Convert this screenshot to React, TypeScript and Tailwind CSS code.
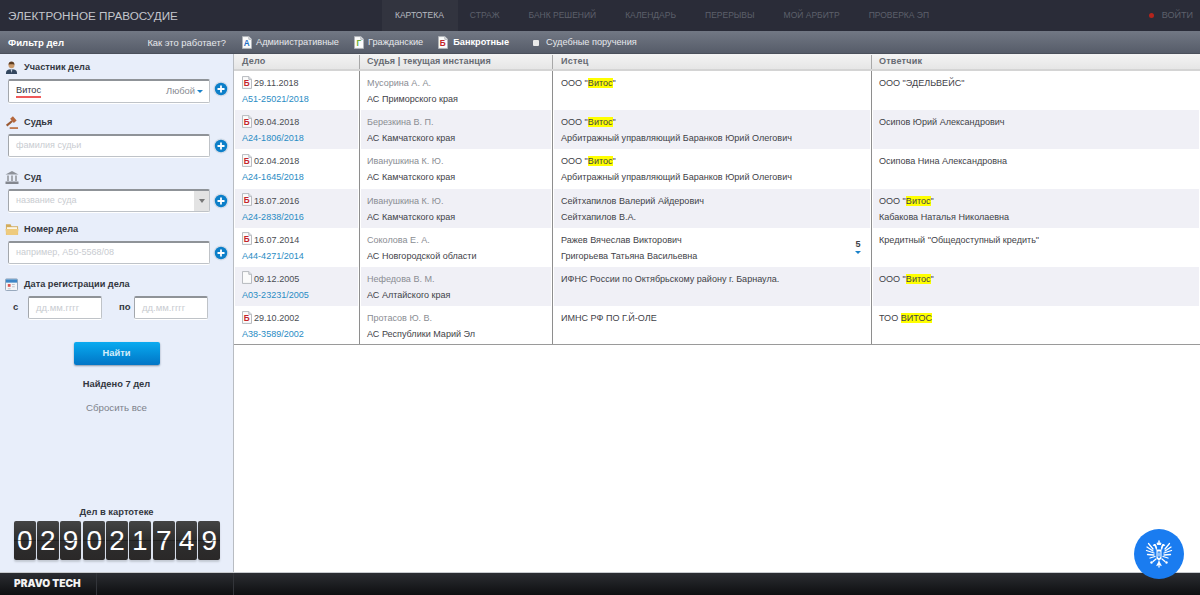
import React from 'react';

const FONT = "font-['Liberation_Sans',Arial,sans-serif]";

const tabs = ['КАРТОТЕКА', 'СТРАЖ', 'БАНК РЕШЕНИЙ', 'КАЛЕНДАРЬ', 'ПЕРЕРЫВЫ', 'МОЙ АРБИТР', 'ПРОВЕРКА ЭП'];

type Row = {
  kind: 'b' | 'none';
  date: string;
  num: string;
  judge: string;
  court: string;
  plaintiff: React.ReactNode[];
  defendant: React.ReactNode[];
  more?: boolean;
};

const Hl = ({ children }: { children: React.ReactNode }) => <span className="bg-[#ffff00]">{children}</span>;
const Vitos = () => <>ООО "<Hl>Витос</Hl>"</>;

const rows: Row[] = [
  { kind: 'b', date: '29.11.2018', num: 'А51-25021/2018', judge: 'Мусорина А. А.', court: 'АС Приморского края', plaintiff: [<Vitos />], defendant: ['ООО "ЭДЕЛЬВЕЙС"'] },
  { kind: 'b', date: '09.04.2018', num: 'А24-1806/2018', judge: 'Березкина В. П.', court: 'АС Камчатского края', plaintiff: [<Vitos />, 'Арбитражный управляющий Баранков Юрий Олегович'], defendant: ['Осипов Юрий Александрович'] },
  { kind: 'b', date: '02.04.2018', num: 'А24-1645/2018', judge: 'Иванушкина К. Ю.', court: 'АС Камчатского края', plaintiff: [<Vitos />, 'Арбитражный управляющий Баранков Юрий Олегович'], defendant: ['Осипова Нина Александровна'] },
  { kind: 'b', date: '18.07.2016', num: 'А24-2838/2016', judge: 'Иванушкина К. Ю.', court: 'АС Камчатского края', plaintiff: ['Сейтхапилов Валерий Айдерович', 'Сейтхапилов В.А.'], defendant: [<Vitos />, 'Кабакова Наталья Николаевна'] },
  { kind: 'b', date: '16.07.2014', num: 'А44-4271/2014', judge: 'Соколова Е. А.', court: 'АС Новгородской области', plaintiff: ['Ражев Вячеслав Викторович', 'Григорьева Татьяна Васильевна'], defendant: ['Кредитный "Общедоступный кредить"'], more: true },
  { kind: 'none', date: '09.12.2005', num: 'А03-23231/2005', judge: 'Нефедова В. М.', court: 'АС Алтайского края', plaintiff: ['ИФНС России по Октябрьскому району г. Барнаула.'], defendant: [<Vitos />] },
  { kind: 'b', date: '29.10.2002', num: 'А38-3589/2002', judge: 'Протасов Ю. В.', court: 'АС Республики Марий Эл', plaintiff: ['ИМНС РФ ПО Г.Й-ОЛЕ'], defendant: [<>ТОО <Hl>ВИТОС</Hl></>] },
];

const FileIcon = ({ letter, color }: { letter?: string; color?: string }) => (
  <svg width="10" height="13" viewBox="0 0 11 14" className="shrink-0">
    <path d="M.5.5h7l3 3v10H.5z" fill="#fbfbfb" stroke="#b0b3b8" />
    <path d="M7.500.5v3h3" fill="#e4e6ea" stroke="#b0b3b8" />
    {letter && (
      <text x="5.200" y="11" fontSize="9" fontWeight="700" textAnchor="middle" fill={color} fontFamily="Liberation Sans, Arial, sans-serif">
        {letter}
      </text>
    )}
  </svg>
);

const Plus = () => (
  <svg width="16" height="16" viewBox="0 0 16 16" className="shrink-0">
    <circle cx="8" cy="8" r="7.600" fill="#d3dce8" />
    <circle cx="8" cy="8" r="6.200" fill="#0c7fc9" />
    <path d="M4.500 8h7M8 4.500v7" stroke="#fff" strokeWidth="1.800" />
  </svg>
);

const PersonIcon = () => (
  <svg width="13" height="13" viewBox="0 0 14 14">
    <path d="M1 14c0-4 2-5 6-5s6 1 6 5z" fill="#33475f" />
    <path d="M6 9h2l-1 4z" fill="#c9d4e2" />
    <circle cx="7" cy="4.500" r="3.200" fill="#c99a6c" />
    <path d="M3.800 4c0-2.500 1.500-3.500 3.200-3.500S10.200 1.500 10.200 4C8.500 3.500 6 3.300 3.800 4z" fill="#5c3c22" />
  </svg>
);

const GavelIcon = () => (
  <svg width="14" height="13" viewBox="0 0 15 14">
    <path d="M1 9.500 7 4.500l1.500 1.700-6 5z" fill="#9a5a34" />
    <path d="m5.500 3 3-2.700 4 4.500-3 2.700z" fill="#b5673c" />
    <path d="M5 12h9v2H5z" fill="#c07a50" />
  </svg>
);

const BankIcon = () => (
  <svg width="14" height="13" viewBox="0 0 14 13">
    <path d="M7 0 13.500 3.500H.5z" fill="#8d9199" />
    <path d="M2 4.500h2v5.500H2zm4 0h2v5.500H6zm4 0h2v5.500h-2z" fill="#a5a9b0" />
    <path d="M.5 10.500h13V13H.5z" fill="#83878f" />
  </svg>
);

const FolderIcon = () => (
  <svg width="14" height="13" viewBox="0 0 15 13">
    <path d="M1 1h5l1 2h7v9H1z" fill="#d2ac5c" />
    <path d="M2 4h11v2H2z" fill="#fbf6e8" />
    <path d="M.5 6h14l-1 6.500h-12z" fill="#eecb7e" />
  </svg>
);

const CalendarIcon = () => (
  <svg width="13" height="13" viewBox="0 0 14 14">
    <rect x=".5" y="1" width="13" height="12.500" rx="1" fill="#f4f5f7" stroke="#8ea0b5" />
    <path d="M1 1.500h12V5H1z" fill="#3d86c6" />
    <path d="M3 6.500h3v3H3z" fill="#d9534f" />
    <path d="M7.500 6.500h3v1h-3zM7.500 9h3v1h-3zM3 11h3v1H3z" fill="#b9c3cf" />
  </svg>
);

// двуглавый орёл на синей кнопке
const Eagle = () => (
  <svg width="28" height="28" viewBox="0 0 28 28" fill="#fff">
    <path d="M14 0l1 1.200-1 1.200-1-1.200zM11.500 3 14 2l2.500 1-.7 2h-3.600z" />
    <path d="M8.500 4.500c1.200-.8 2.400-.3 2.800.8l.9 2.700-1 2.500-1.200-3.500-.5-1-1.800-.3zM19.500 4.500c-1.200-.8-2.400-.3-2.800.8l-.9 2.700 1 2.500 1.200-3.500.5-1 1.800-.3z" />
    <g stroke="#fff" strokeWidth="1.300" strokeLinecap="round" fill="none">
      <path d="M8 9 3.500 3.500M8 11 2 7M9 13 1.500 10.500M9 15 2.500 14.500M10 16.500l-5 1.500" />
      <path d="M20 9l4.500-5.500M20 11l6-4M19 13l7.500-2.500M19 15l6.500-.5M18 16.500l5 1.500" />
      <path d="M11 19l-3 2.500M17 19l3 2.500" />
      <path d="M14 21v6M14 22l-2 3.500M14 22l2 3.500" />
    </g>
    <path d="M11.500 9.500h5v8c0 1.300-1.200 2.200-2.500 2.800-1.300-.6-2.500-1.500-2.500-2.800z" />
    <path d="M12.600 11.500h2.800v5.500L14 18.300 12.600 17z" fill="#1a7cf0" />
    <path d="M13.500 12.500h1v4h-1z" />
    <circle cx="6.500" cy="22.500" r="1.200" />
    <circle cx="21.500" cy="22.500" r="1.200" />
  </svg>
);

const Section = ({ icon, label, className }: { icon: React.ReactNode; label: string; className: string }) => (
  <div className={`flex items-center h-[14px] ${className}`}>
    <span className="w-[24px] pl-[5px] flex items-center">{icon}</span>
    <span className="pt-[2px] text-[9.200px] font-bold text-[#33373f]">{label}</span>
  </div>
);

const inputBox = 'bg-white rounded-[2px] border border-[#bfc3c8] border-t-2 border-t-[#8f9398] border-l-[#a3a7ac] shadow-[0_1px_0_#fff]';

const Field = ({ children, className, tall, plusClass }: { children: React.ReactNode; className: string; tall?: boolean; plusClass?: string }) => (
  <div className={`flex items-center pl-[8px] ${className}`}>
    <div className={`w-[202px] ${tall ? 'h-[24px]' : 'h-[23px]'} flex items-center pl-[7px] relative ${inputBox}`}>{children}</div>
    <span className={`ml-[3px] ${plusClass ?? ''}`}><Plus /></span>
  </div>
);

const Ph = ({ children }: { children: React.ReactNode }) => <span className="text-[9.050px] text-[#c9ccd1]">{children}</span>;

const Digit = ({ d }: { d: string }) => (
  <div className="relative w-[21.800px] h-[39px] rounded-[2px] bg-gradient-to-b from-[#444444] via-[#2e2e2e] to-[#2a2828] flex items-center justify-center shadow-[0_2px_2px_#c3c9d3]">
    <span className="text-white text-[28px] leading-none font-['Liberation_Sans',Arial,sans-serif]">{d}</span>
    <span className="absolute left-0 right-0 top-[19px] h-px bg-[#111111]/50" />
  </div>
);

const cols = 'grid-cols-[125px_193px_319px_329px]';
const cell = 'pt-[4px] leading-[16px] border-r border-r-white shadow-[inset_1px_0_0_#fff]';

export default function App() {
  return (
    <div className={`w-[1200px] h-[595px] overflow-hidden flex flex-col bg-white relative ${FONT}`}>
      {/* top nav */}
      <div className="h-[31px] bg-[#2a2c38] flex items-center shrink-0">
        <div className="w-[382px] pl-[8px] text-[11.700px] text-[#c3c5cb]">ЭЛЕКТРОННОЕ ПРАВОСУДИЕ</div>
        <div className="flex h-full text-[8.500px]">
          {tabs.map((t, i) => (
            <div
              key={t}
              className={
                i === 0
                  ? 'h-full flex items-center pl-[13px] pr-[14px] bg-[#32343f] text-[#b9bbc1]'
                  : 'h-full flex items-center pl-[12px] pr-[17px] text-[#5d606b]'
              }
            >
              {t}
            </div>
          ))}
        </div>
        <div className="ml-auto flex items-center pr-[7px] text-[9.050px] text-[#5d606b]">
          <span className="w-[5px] h-[5px] rounded-full bg-[#b3241c] mr-[8px]" />
          ВОЙТИ
        </div>
      </div>

      {/* filter bar */}
      <div className="h-[23px] shrink-0 flex items-center pt-[2px] bg-gradient-to-b from-[#727884] to-[#565c69] border-b border-b-[#4b505b]">
        <div className="w-[234px] flex items-center justify-between pl-[8px] pr-[8px] h-full">
          <span className="text-[9.600px] font-bold text-white">Фильтр дел</span>
          <span className="text-[9.400px] text-[#e6e8ec]">Как это работает?</span>
        </div>
        <div className="flex items-center text-[9.200px] text-[#e6e8ec]">
          <span className="ml-[8px] mr-[4px]"><FileIcon letter="А" color="#1f6fc4" /></span>
          Административные
          <span className="ml-[15px] mr-[4px]"><FileIcon letter="Г" color="#6cae2e" /></span>
          Гражданские
          <span className="ml-[15px] mr-[5px]"><FileIcon letter="Б" color="#c4262b" /></span>
          <span className="font-bold text-white">Банкротные</span>
          <span className="w-[6px] h-[6px] rounded-[1px] bg-[#e9e9e9] ml-[24px] mr-[7px]" />
          Судебные поручения
        </div>
      </div>

      <div className="flex-1 flex min-h-0">
        {/* sidebar */}
        <aside className="w-[234px] shrink-0 bg-[#e8eefa] border-r border-r-[#b8bcc2] flex flex-col pt-[6px]">
          <Section icon={<PersonIcon />} label="Участник дела" className="" />
          <Field className="mt-[5px]" tall plusClass="mb-[4px]">
            <span className="text-[9.200px] text-[#33373f] border-b-2 border-b-[#ef5a5a] leading-[11px]">Витос</span>
            <span className="ml-auto text-[9.400px] text-[#8a8d93]">Любой</span>
            <span className="ml-[2px] mr-[6px] w-0 h-0 border-x-[3px] border-x-transparent border-t-[3px] border-t-[#1b82c9]" />
          </Field>
          <Section icon={<GavelIcon />} label="Судья" className="mt-[12px]" />
          <Field className="mt-[5px]"><Ph>фамилия судьи</Ph></Field>
          <Section icon={<BankIcon />} label="Суд" className="mt-[13px]" />
          <Field className="mt-[5px]">
            <Ph>название суда</Ph>
            <span className="absolute right-0 top-0 bottom-0 w-[15px] bg-[#e3e3e3] flex items-center justify-center">
              <span className="w-0 h-0 border-x-[3px] border-x-transparent border-t-[4px] border-t-[#777777]" />
            </span>
          </Field>
          <Section icon={<FolderIcon />} label="Номер дела" className="mt-[10px]" />
          <Field className="mt-[5px]"><Ph>например, А50-5568/08</Ph></Field>
          <Section icon={<CalendarIcon />} label="Дата регистрации дела" className="mt-[13px]" />
          <div className="flex items-center mt-[5px] h-[23px] text-[9.500px] font-bold text-[#33373f]">
            <span className="w-[28px] pl-[13px]">с</span>
            <div className={`w-[74px] h-[23px] flex items-center pl-[7px] ${inputBox}`}><span className="text-[9.500px] font-normal text-[#c9ccd1]">дд.мм.гггг</span></div>
            <span className="w-[32px] pl-[17px]">по</span>
            <div className={`w-[74px] h-[23px] flex items-center pl-[7px] ${inputBox}`}><span className="text-[9.500px] font-normal text-[#c9ccd1]">дд.мм.гггг</span></div>
          </div>
          <div className="flex justify-center mt-[23px]">
            <div className="w-[86px] h-[23px] pt-px rounded-[2px] bg-gradient-to-b from-[#0cabf0] to-[#0275c6] flex items-center justify-center text-[9.300px] font-bold text-[#d5eefb] shadow-[0_1px_2px_#8795a8]">
              Найти
            </div>
          </div>
          <div className="text-center text-[9.300px] font-bold text-[#33373f] mt-[13px] leading-[12px]">Найдено 7 дел</div>
          <div className="text-center text-[9.700px] text-[#7d828b] mt-[12px] leading-[12px]">Сбросить все</div>
          <div className="mt-auto text-center text-[9.400px] font-bold text-[#33373f] leading-[12px] mb-[3px]">Дел в картотеке</div>
          <div className="flex pl-[14px] mb-[12px]">
            {['029', '021', '749'].map((g, i) => (
              <div key={g} className={`flex gap-px ${i > 0 ? 'ml-[2px]' : ''}`}>
                {g.split('').map((d, j) => <Digit key={j} d={d} />)}
              </div>
            ))}
          </div>
        </aside>

        {/* results */}
        <main className="flex-1 min-w-0 text-[9.050px]">
          <div className={`grid ${cols} h-[17px] pt-px bg-gradient-to-b from-[#f4f4f4] to-[#e6e6e6] border-b-2 border-b-[#d4d4d4] font-bold text-[#676b73]`}>
            <div className="pl-[8px] flex items-center tracking-[0.200px]">Дело</div>
            <div className="pl-[7px] flex items-center border-l border-l-[#a8a8a8] tracking-[0.050px]">Судья | текущая инстанция</div>
            <div className="pl-[8px] flex items-center border-l border-l-[#a8a8a8] tracking-[0.200px]">Истец</div>
            <div className="pl-[7px] flex items-center border-l border-l-[#a8a8a8] tracking-[0.200px]">Ответчик</div>
          </div>
          {rows.map((r, i) => (
            <div key={r.num} className={`grid ${cols} h-[39.200px] ${i === rows.length - 1 ? 'border-b border-b-[#9a9a9a]' : ''}`}>
              <div className={`pl-[8px] ${cell} ${i % 2 ? 'bg-[#f0f0f6]' : 'bg-white'}`}>
                <div className="flex items-center text-[#4a4d53]">
                  <span className="mr-[2px] flex -mt-[2px]"><FileIcon letter={r.kind === 'b' ? 'Б' : undefined} color="#c4262b" /></span>
                  {r.date}
                </div>
                <div className="text-[#2a8cc4]">{r.num}</div>
              </div>
              <div className={`pl-[7px] border-l border-l-[#8e8e8e] ${cell} ${i % 2 ? 'bg-[#f0f0f6]' : 'bg-white'}`}>
                <div className="text-[#8a8d93]">{r.judge}</div>
                <div className="text-[#3f4248]">{r.court}</div>
              </div>
              <div className={`pl-[8px] border-l border-l-[#8e8e8e] text-[#3f4248] relative ${cell} ${i % 2 ? 'bg-[#f0f0f6]' : 'bg-white'}`}>
                {r.plaintiff.map((p, k) => <div key={k}>{p}</div>)}
                {r.more && (
                  <span className="absolute right-[9px] top-[11px] flex flex-col items-center font-bold text-[#3f4248] leading-[10px]">
                    5
                    <span className="w-0 h-0 border-x-[3px] border-x-transparent border-t-[3px] border-t-[#1b82c9] mt-[2px]" />
                  </span>
                )}
              </div>
              <div className={`pl-[7px] border-l border-l-[#8e8e8e] text-[#3f4248] ${cell} ${i % 2 ? 'bg-[#f0f0f6]' : 'bg-white'}`}>
                {r.defendant.map((p, k) => <div key={k}>{p}</div>)}
              </div>
            </div>
          ))}
        </main>
      </div>

      {/* footer */}
      <div className="h-[23px] shrink-0 flex bg-gradient-to-b from-[#2c2e33] to-[#0e0f11] border-t border-t-[#c9ccd0]">
        <div className="w-[97px] pl-[14px] flex items-center text-[10.200px] font-black text-[#f2f2f2] font-['Inter',sans-serif] border-r border-r-[#33353a]">PRAVO TECH</div>
        <div className="w-[137px] border-r border-r-[#33353a]" />
      </div>

      {/* floating badge */}
      <div className="absolute left-[1134px] top-[529px] w-[50px] h-[50px] rounded-full bg-[#1a7cf0] flex items-center justify-center">
        <Eagle />
      </div>
    </div>
  );
}
